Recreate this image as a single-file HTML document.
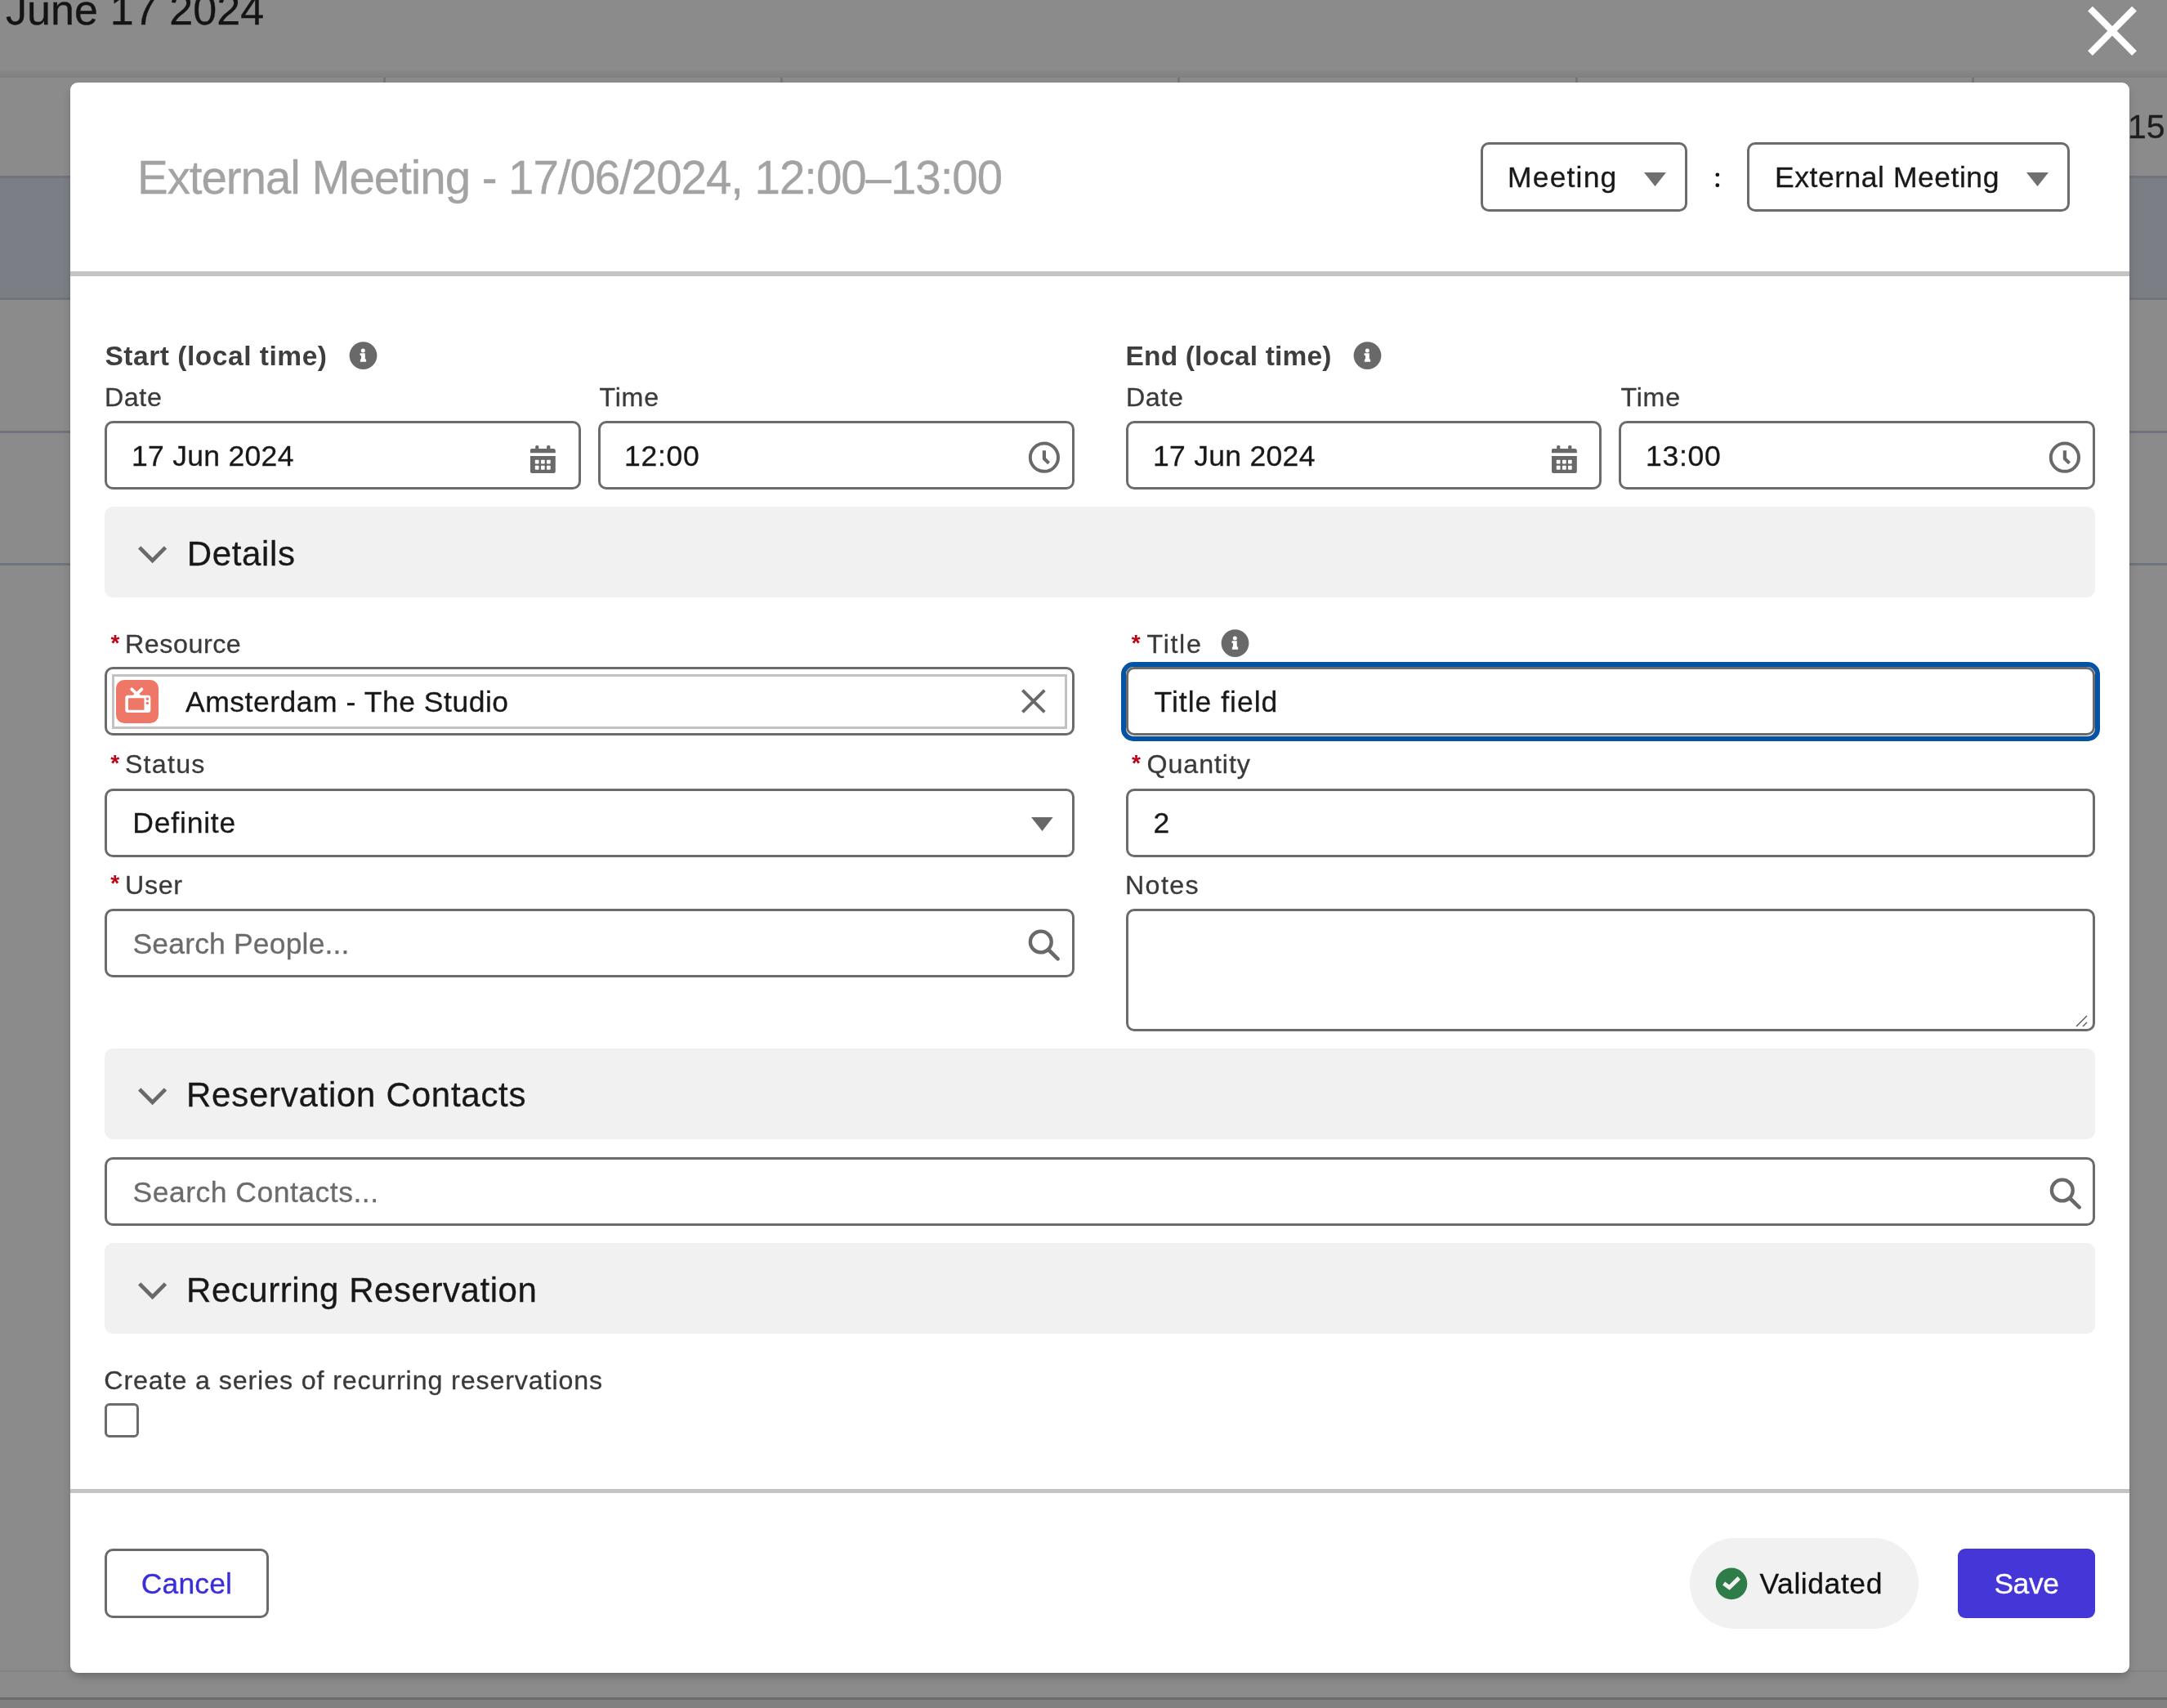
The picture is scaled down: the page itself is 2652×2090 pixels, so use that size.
<!DOCTYPE html>
<html><head><meta charset="utf-8">
<style>
html,body{margin:0;padding:0;}
body{width:2652px;height:2090px;overflow:hidden;position:relative;background:#8b8b8b;font-family:"Liberation Sans",sans-serif;}
.a{position:absolute;}
.t{position:absolute;line-height:1;white-space:pre;}
.txt{position:absolute;left:0;top:0;width:2652px;height:2090px;will-change:transform;}
.box{position:absolute;box-sizing:border-box;border:3px solid #6b6b6b;border-radius:10px;background:#fff;}
.sec{position:absolute;left:128px;width:2436px;height:111px;background:#f1f1f1;border-radius:10px;}
.lbl{position:absolute;line-height:1;white-space:pre;font-size:33px;color:#444;letter-spacing:0.3px;}
.inp{position:absolute;line-height:1;white-space:pre;font-size:36.3px;color:#181818;}
.ph{color:#747474;}
.req{color:#ba0517;}
.sect{position:absolute;line-height:1;white-space:pre;font-size:45px;color:#181818;letter-spacing:-0.7px;}
</style></head>
<body>
<!-- background calendar -->
<div class="a" style="left:0;top:83px;width:2652px;height:12px;background:linear-gradient(rgba(0,0,0,0),rgba(0,0,0,0.085));"></div>
<div class="a" style="left:469px;top:95px;width:3px;height:10px;background:#727781;"></div>
<div class="a" style="left:955px;top:95px;width:3px;height:10px;background:#727781;"></div>
<div class="a" style="left:1441px;top:95px;width:3px;height:10px;background:#727781;"></div>
<div class="a" style="left:1928px;top:95px;width:3px;height:10px;background:#727781;"></div>
<div class="a" style="left:2413px;top:95px;width:3px;height:10px;background:#727781;"></div>
<div class="a" style="left:0;top:215px;width:2652px;height:152px;background:#7b7e84;border-top:3px solid #70747b;border-bottom:3px solid #70747b;box-sizing:border-box;"></div>
<div class="a" style="left:0;top:527px;width:2652px;height:3px;background:#6f737b;"></div>
<div class="a" style="left:0;top:689px;width:2652px;height:3px;background:#6f737b;"></div>
<div class="a" style="left:0;top:2044px;width:2652px;height:2px;background:#848484;"></div>
<div class="a" style="left:0;top:2077px;width:2652px;height:3px;background:#6b6b6b;"></div>
<div class="a" style="left:0;top:2080px;width:2652px;height:10px;background:#808080;"></div>

<!-- close X -->
<svg class="a" style="left:2550px;top:3px" width="70" height="70" viewBox="0 0 70 70"><path d="M8 7.6 L62 62.2 M62 7.6 L8 62.2" stroke="#fff" stroke-width="8.2"/></svg>

<!-- modal -->
<div class="a" style="left:86px;top:101px;width:2520px;height:1946px;background:#fff;border-radius:9px;box-shadow:0 6px 12px -3px rgba(0,0,0,0.28);"></div>
<div class="a" style="left:86px;top:332px;width:2520px;height:6px;background:#c4c4c4;"></div>
<div class="a" style="left:86px;top:1822px;width:2520px;height:5px;background:#c4c4c4;"></div>

<!-- header -->

<div class="box" style="left:1812px;top:174px;width:253px;height:85px;"></div>
<svg class="a" style="left:2012px;top:211px" width="27" height="17"><path d="M0 0 L27 0 L13.5 17 Z" fill="#6f6f6f"/></svg>
<div class="box" style="left:2138px;top:174px;width:395px;height:85px;"></div>
<svg class="a" style="left:2095px;top:207px" width="14" height="26"><circle cx="6.8" cy="6.8" r="2.4" fill="#111"/><circle cx="6.8" cy="19.7" r="2.4" fill="#111"/></svg>
<svg class="a" style="left:2480px;top:211px" width="27" height="17"><path d="M0 0 L27 0 L13.5 17 Z" fill="#6f6f6f"/></svg>


<!-- ===== Start / End ===== -->
<svg class="a" style="left:426px;top:417px" width="36" height="36" viewBox="0 0 36 36"><circle cx="18.5" cy="18.1" r="16.9" fill="#696969"/><circle cx="18.3" cy="11.9" r="2.5" fill="#fff"/><path d="M14.6 15.2 H20.8 V22.6 H22.1 V25.8 H14.9 V22.6 H16.0 V17.9 H14.6 Z" fill="#fff"/></svg>
<svg class="a" style="left:1655px;top:417px" width="36" height="36" viewBox="0 0 36 36"><circle cx="18.5" cy="18.1" r="16.9" fill="#696969"/><circle cx="18.3" cy="11.9" r="2.5" fill="#fff"/><path d="M14.6 15.2 H20.8 V22.6 H22.1 V25.8 H14.9 V22.6 H16.0 V17.9 H14.6 Z" fill="#fff"/></svg>


<div class="box" style="left:128px;top:515px;width:583px;height:84px;"></div>
<div class="box" style="left:732px;top:515px;width:583px;height:84px;"></div>
<div class="box" style="left:1378px;top:515px;width:582px;height:84px;"></div>
<div class="box" style="left:1981px;top:515px;width:583px;height:84px;"></div>

<svg class="a cal" style="left:648px;top:544px" width="34" height="36" viewBox="0 0 34 36"><g fill="#696969"><rect x="7.2" y="1" width="4.1" height="6" rx="1.5"/><rect x="21.1" y="1" width="4.3" height="6" rx="1.5"/><path d="M2.5 5 H29.3 Q31.8 5 31.8 7.5 V10.3 H1 V6.5 Q1 5 2.5 5 Z"/><path d="M1 14 H31.8 V32.9 Q31.8 35 29.7 35 H3.1 Q1 35 1 32.9 Z"/></g><g fill="#fff"><rect x="6.8" y="18.7" width="4.7" height="4.8" rx="0.8"/><rect x="14" y="18.7" width="4.7" height="4.8" rx="0.8"/><rect x="21" y="18.7" width="4.7" height="4.8" rx="0.8"/><rect x="6.8" y="25.8" width="4.7" height="5" rx="0.8"/><rect x="14" y="25.8" width="4.7" height="5" rx="0.8"/><rect x="21" y="25.8" width="4.7" height="5" rx="0.8"/></g></svg>
<svg class="a" style="left:1898px;top:544px" width="34" height="36" viewBox="0 0 34 36"><g fill="#696969"><rect x="7.2" y="1" width="4.1" height="6" rx="1.5"/><rect x="21.1" y="1" width="4.3" height="6" rx="1.5"/><path d="M2.5 5 H29.3 Q31.8 5 31.8 7.5 V10.3 H1 V6.5 Q1 5 2.5 5 Z"/><path d="M1 14 H31.8 V32.9 Q31.8 35 29.7 35 H3.1 Q1 35 1 32.9 Z"/></g><g fill="#fff"><rect x="6.8" y="18.7" width="4.7" height="4.8" rx="0.8"/><rect x="14" y="18.7" width="4.7" height="4.8" rx="0.8"/><rect x="21" y="18.7" width="4.7" height="4.8" rx="0.8"/><rect x="6.8" y="25.8" width="4.7" height="5" rx="0.8"/><rect x="14" y="25.8" width="4.7" height="5" rx="0.8"/><rect x="21" y="25.8" width="4.7" height="5" rx="0.8"/></g></svg>

<svg class="a" style="left:1256px;top:538px" width="44" height="44" viewBox="0 0 44 44"><circle cx="21.9" cy="21.7" r="17.1" fill="none" stroke="#696969" stroke-width="4"/><path d="M21.9 13.2 V23.2 L27.6 28.7" fill="none" stroke="#696969" stroke-width="4.2" stroke-linejoin="round"/></svg>
<svg class="a" style="left:2505px;top:538px" width="44" height="44" viewBox="0 0 44 44"><circle cx="21.9" cy="21.7" r="17.1" fill="none" stroke="#696969" stroke-width="4"/><path d="M21.9 13.2 V23.2 L27.6 28.7" fill="none" stroke="#696969" stroke-width="4.2" stroke-linejoin="round"/></svg>

<!-- ===== Details ===== -->
<div class="sec" style="top:620px;"></div>
<svg class="a" style="left:165px;top:660px" width="44" height="36" viewBox="0 0 44 36"><path d="M5.7 9.9 L21.6 25.9 L37.5 9.9" fill="none" stroke="#696969" stroke-width="4.8"/></svg>

<div class="box" style="left:128px;top:816px;width:1187px;height:84px;"></div>
<div class="a" style="left:137px;top:825px;width:1169px;height:67px;box-sizing:border-box;border:3px solid #c2c2c2;"></div>
<svg class="a" style="left:142px;top:832px" width="52" height="53" viewBox="0 0 52 53"><rect x="0" y="0" width="52" height="53" rx="10" fill="#ef7767"/><path d="M19.2 11.3 L25.4 17.2 L31.4 11.3" fill="none" stroke="#fff" stroke-width="3.8" stroke-linecap="round" stroke-linejoin="round"/><path d="M20.5 19.5 H30.2 L27.4 15.6 H23.3 Z" fill="#fff"/><rect x="11.3" y="18.8" width="31" height="21.2" rx="3.2" fill="#fff"/><rect x="14.9" y="22.2" width="19.6" height="14.5" rx="0.8" fill="#ef7767"/><circle cx="38.4" cy="23.3" r="1.7" fill="#ef7767"/><circle cx="38.4" cy="28.4" r="1.7" fill="#ef7767"/></svg>
<svg class="a" style="left:1246px;top:839px" width="38" height="38" viewBox="0 0 38 38"><path d="M5.4 5.7 L32.3 32.4 M32.3 5.7 L5.4 32.4" stroke="#696969" stroke-width="3.9"/></svg>

<svg class="a" style="left:1493px;top:769px" width="36" height="36" viewBox="0 0 36 36"><circle cx="18.5" cy="18.1" r="16.9" fill="#696969"/><circle cx="18.3" cy="11.9" r="2.5" fill="#fff"/><path d="M14.6 15.2 H20.8 V22.6 H22.1 V25.8 H14.9 V22.6 H16.0 V17.9 H14.6 Z" fill="#fff"/></svg>
<div class="a" style="left:1372px;top:810px;width:1198px;height:97px;box-sizing:border-box;border:6px solid #0454a3;border-radius:15px;"></div>
<div class="box" style="left:1378px;top:816px;width:1186px;height:84px;"></div>

<div class="box" style="left:128px;top:965px;width:1187px;height:84px;"></div>
<svg class="a" style="left:1262px;top:1000px" width="27" height="17"><path d="M0 0 L26.6 0 L13.5 17 Z" fill="#686868"/></svg>

<div class="box" style="left:1378px;top:965px;width:1186px;height:84px;"></div>

<div class="box" style="left:128px;top:1112px;width:1187px;height:84px;"></div>
<svg class="a" style="left:1254px;top:1133px" width="46" height="46" viewBox="0 0 46 46"><circle cx="19.8" cy="19.5" r="12.9" fill="none" stroke="#696969" stroke-width="4.4"/><path d="M29.5 29.5 L40.6 40.4" stroke="#696969" stroke-width="4.6" stroke-linecap="round"/></svg>

<div class="box" style="left:1378px;top:1112px;width:1186px;height:150px;"></div>
<svg class="a" style="left:2539px;top:1239px" width="20" height="20" viewBox="0 0 20 20"><path d="M2 17 L15 4 M10 17 L15 12" stroke="#555" stroke-width="1.4"/></svg>

<!-- ===== Reservation Contacts ===== -->
<div class="sec" style="top:1283px;"></div>
<svg class="a" style="left:165px;top:1323px" width="44" height="36" viewBox="0 0 44 36"><path d="M5.7 9.9 L21.6 25.9 L37.5 9.9" fill="none" stroke="#696969" stroke-width="4.8"/></svg>
<div class="box" style="left:128px;top:1416px;width:2436px;height:84px;"></div>
<svg class="a" style="left:2504px;top:1437px" width="46" height="46" viewBox="0 0 46 46"><circle cx="19.8" cy="19.5" r="12.9" fill="none" stroke="#696969" stroke-width="4.4"/><path d="M29.5 29.5 L40.6 40.4" stroke="#696969" stroke-width="4.6" stroke-linecap="round"/></svg>

<!-- ===== Recurring ===== -->
<div class="sec" style="top:1521px;"></div>
<svg class="a" style="left:165px;top:1561px" width="44" height="36" viewBox="0 0 44 36"><path d="M5.7 9.9 L21.6 25.9 L37.5 9.9" fill="none" stroke="#696969" stroke-width="4.8"/></svg>
<div class="a" style="left:128px;top:1717px;width:42px;height:42px;box-sizing:border-box;border:3px solid #6b6b6b;border-radius:6px;"></div>

<!-- ===== Footer ===== -->
<div class="box" style="left:128px;top:1895px;width:201px;height:85px;"></div>
<div class="a" style="left:2068px;top:1882px;width:280px;height:111px;background:#f1f1f1;border-radius:56px;"></div>
<svg class="a" style="left:2098px;top:1917px" width="42" height="42" viewBox="0 0 42 42"><circle cx="21" cy="20.9" r="19.3" fill="#2e7d49"/><path d="M11.6 20.4 L18.4 25.5 L30.3 13.9" fill="none" stroke="#f1f1f1" stroke-width="5"/></svg>
<div class="a" style="left:2396px;top:1895px;width:168px;height:85px;background:#4537d7;border-radius:9px;"></div>

<div class="txt">
<div class="t" style="left:7.0px;top:-13.6px;font-size:52px;color:#141414;-webkit-text-stroke:0.3px currentColor;letter-spacing:0.091px;">June 17 2024</div>
<div class="t" style="left:2604.0px;top:134.6px;font-size:41px;color:#1e1e1e;-webkit-text-stroke:0.3px currentColor;">15</div>
<div class="t" style="left:168.0px;top:190.2px;font-size:56.5px;color:#a3a3a3;-webkit-text-stroke:0.3px currentColor;letter-spacing:-1.059px;">External Meeting - 17/06/2024, 12:00–13:00</div>
<div class="t" style="left:1845.0px;top:200.0px;font-size:35.5px;color:#181818;-webkit-text-stroke:0.3px currentColor;letter-spacing:1.167px;">Meeting</div>
<div class="t" style="left:2172.0px;top:200.0px;font-size:35.5px;color:#181818;-webkit-text-stroke:0.3px currentColor;letter-spacing:0.533px;">External Meeting</div>
<div class="t" style="left:128.5px;top:419.3px;font-size:33.5px;color:#3e3e3e;font-weight:700;letter-spacing:0.529px;">Start (local time)</div>
<div class="t" style="left:1377.5px;top:419.3px;font-size:33.5px;color:#3e3e3e;font-weight:700;letter-spacing:0.167px;">End (local time)</div>
<div class="t" style="left:128.0px;top:469.7px;font-size:32.2px;color:#3a3a3a;-webkit-text-stroke:0.3px currentColor;letter-spacing:0.6px;">Date</div>
<div class="t" style="left:733.5px;top:469.7px;font-size:32.2px;color:#3a3a3a;-webkit-text-stroke:0.3px currentColor;letter-spacing:0.733px;">Time</div>
<div class="t" style="left:1378.0px;top:469.7px;font-size:32.2px;color:#3a3a3a;-webkit-text-stroke:0.3px currentColor;letter-spacing:0.6px;">Date</div>
<div class="t" style="left:1983.5px;top:469.7px;font-size:32.2px;color:#3a3a3a;-webkit-text-stroke:0.3px currentColor;letter-spacing:0.733px;">Time</div>
<div class="t" style="left:160.9px;top:540.9px;font-size:35.5px;color:#181818;-webkit-text-stroke:0.3px currentColor;letter-spacing:0.31px;">17 Jun 2024</div>
<div class="t" style="left:764.0px;top:540.9px;font-size:35.5px;color:#181818;-webkit-text-stroke:0.3px currentColor;letter-spacing:0.75px;">12:00</div>
<div class="t" style="left:1410.9px;top:540.9px;font-size:35.5px;color:#181818;-webkit-text-stroke:0.3px currentColor;letter-spacing:0.31px;">17 Jun 2024</div>
<div class="t" style="left:2014.0px;top:540.9px;font-size:35.5px;color:#181818;-webkit-text-stroke:0.3px currentColor;letter-spacing:0.75px;">13:00</div>
<div class="t" style="left:228.8px;top:656.7px;font-size:42px;color:#181818;-webkit-text-stroke:0.3px currentColor;letter-spacing:0.65px;">Details</div>
<div class="t" style="left:135.6px;top:773.2px;font-size:28px;color:#ba0517;font-weight:700;">*</div>
<div class="t" style="left:153.0px;top:772.0px;font-size:32.2px;color:#3a3a3a;-webkit-text-stroke:0.3px currentColor;letter-spacing:0.571px;">Resource</div>
<div class="t" style="left:227.0px;top:842.0px;font-size:35.5px;color:#181818;-webkit-text-stroke:0.3px currentColor;letter-spacing:0.524px;">Amsterdam - The Studio</div>
<div class="t" style="left:1384.8px;top:772.8px;font-size:28px;color:#ba0517;font-weight:700;">*</div>
<div class="t" style="left:1403.6px;top:772.0px;font-size:32.2px;color:#3a3a3a;-webkit-text-stroke:0.3px currentColor;letter-spacing:1.65px;">Title</div>
<div class="t" style="left:1412.6px;top:842.0px;font-size:35.5px;color:#181818;-webkit-text-stroke:0.3px currentColor;letter-spacing:1.0px;">Title field</div>
<div class="t" style="left:135.3px;top:919.7px;font-size:28px;color:#ba0517;font-weight:700;">*</div>
<div class="t" style="left:152.9px;top:919.1px;font-size:32.2px;color:#3a3a3a;-webkit-text-stroke:0.3px currentColor;letter-spacing:1.26px;">Status</div>
<div class="t" style="left:162.3px;top:990.0px;font-size:35.5px;color:#181818;-webkit-text-stroke:0.3px currentColor;letter-spacing:0.8px;">Definite</div>
<div class="t" style="left:1385.0px;top:919.7px;font-size:28px;color:#ba0517;font-weight:700;">*</div>
<div class="t" style="left:1403.5px;top:919.1px;font-size:32.2px;color:#3a3a3a;-webkit-text-stroke:0.3px currentColor;letter-spacing:0.929px;">Quantity</div>
<div class="t" style="left:1411.5px;top:990.0px;font-size:35.5px;color:#181818;-webkit-text-stroke:0.3px currentColor;">2</div>
<div class="t" style="left:135.3px;top:1066.7px;font-size:28px;color:#ba0517;font-weight:700;">*</div>
<div class="t" style="left:153.0px;top:1067.0px;font-size:32.2px;color:#3a3a3a;-webkit-text-stroke:0.3px currentColor;letter-spacing:0.667px;">User</div>
<div class="t" style="left:162.5px;top:1138.0px;font-size:35.5px;color:#6b6b6b;-webkit-text-stroke:0.3px currentColor;letter-spacing:0.167px;">Search People...</div>
<div class="t" style="left:1377.0px;top:1067.0px;font-size:32.2px;color:#3a3a3a;-webkit-text-stroke:0.3px currentColor;letter-spacing:1.375px;">Notes</div>
<div class="t" style="left:228.0px;top:1319.0px;font-size:42px;color:#181818;-webkit-text-stroke:0.3px currentColor;letter-spacing:0.737px;">Reservation Contacts</div>
<div class="t" style="left:162.5px;top:1442.0px;font-size:35.5px;color:#6b6b6b;-webkit-text-stroke:0.3px currentColor;letter-spacing:0.5px;">Search Contacts...</div>
<div class="t" style="left:228.0px;top:1557.5px;font-size:42px;color:#181818;-webkit-text-stroke:0.3px currentColor;letter-spacing:0.55px;">Recurring Reservation</div>
<div class="t" style="left:127.3px;top:1673.4px;font-size:32.2px;color:#3a3a3a;-webkit-text-stroke:0.3px currentColor;letter-spacing:0.89px;">Create a series of recurring reservations</div>
<div class="t" style="left:172.8px;top:1920.8px;font-size:35.5px;color:#3a2fd6;-webkit-text-stroke:0.3px currentColor;letter-spacing:0.12px;">Cancel</div>
<div class="t" style="left:2153.5px;top:1921.1px;font-size:35.5px;color:#111111;-webkit-text-stroke:0.3px currentColor;letter-spacing:0.562px;">Validated</div>
<div class="t" style="left:2440.4px;top:1921.1px;font-size:35.5px;color:#ffffff;-webkit-text-stroke:0.3px currentColor;letter-spacing:-0.467px;">Save</div>
</div>
</body></html>
